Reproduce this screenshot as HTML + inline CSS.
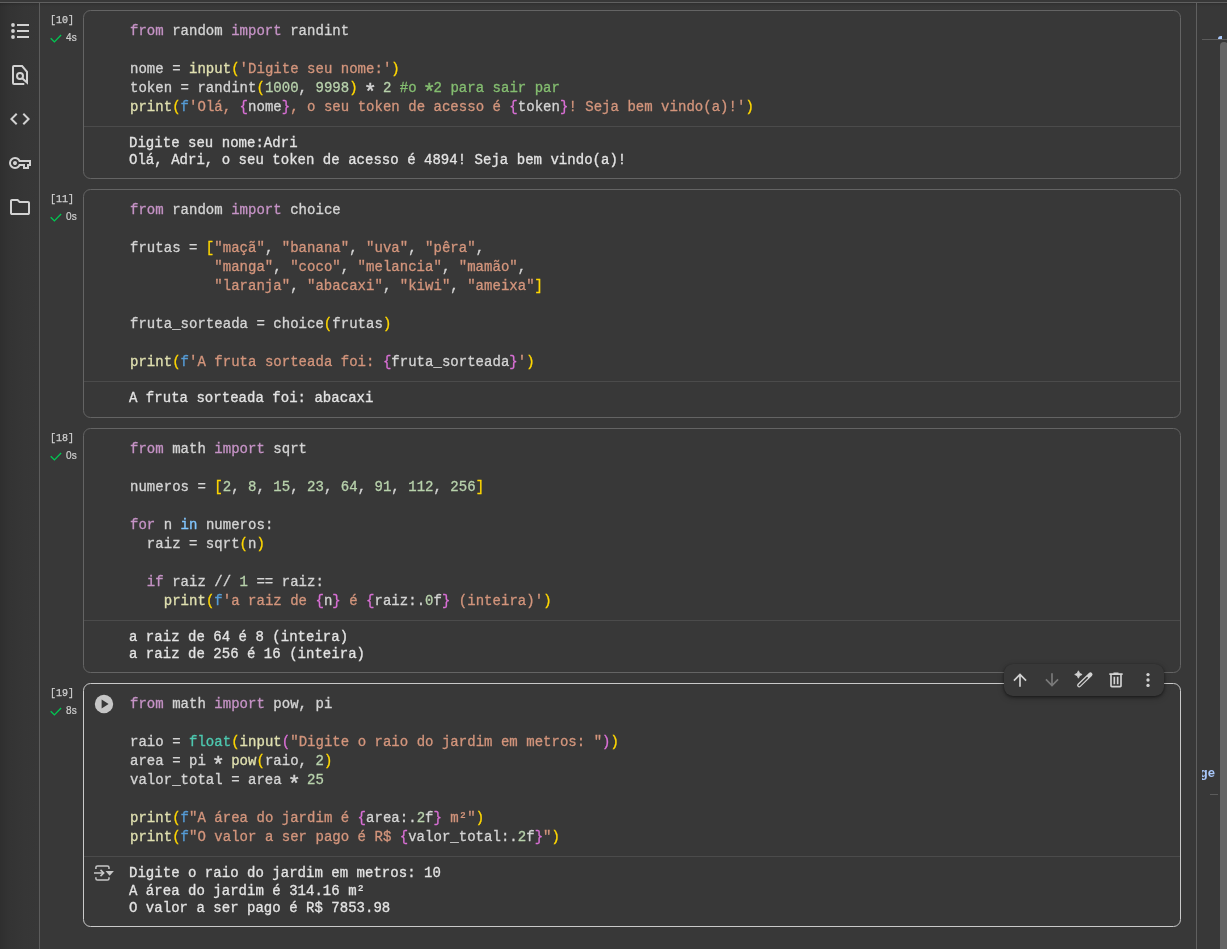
<!DOCTYPE html>
<html>
<head>
<meta charset="utf-8">
<title>Colab</title>
<style>
html,body{margin:0;padding:0;}
body{width:1227px;height:949px;overflow:hidden;position:relative;background:#383838;font-family:"Liberation Sans",sans-serif;}
.abs{position:absolute;}
#topline{left:0;top:2px;width:1227px;height:1px;background:#606060;}
#topshadow{left:0;top:3px;width:1227px;height:4px;background:linear-gradient(to bottom,rgba(0,0,0,.16),rgba(0,0,0,.05) 50%,rgba(0,0,0,0));}
#leftbar{left:0;top:3px;width:39px;height:946px;background:linear-gradient(to right,#2f2f2f 0,#333333 8px,#363636 24px,#373737 39px);}
#leftline{left:39px;top:3px;width:1px;height:946px;background:#5c5c5c;}
#rightline{left:1196px;top:3px;width:1px;height:946px;background:#606060;}
#sbthumb{left:1220px;top:42px;width:8px;height:920px;border-radius:4px;background:#656565;}
#rtick1{left:1202px;top:39px;width:25px;height:1px;background:#5b5b5b;}
#rtick2{left:1210px;top:794px;width:8px;height:1px;background:#5b5b5b;}
#rblue{left:1218px;top:36px;width:4px;height:3px;background:#a8c7fa;border-radius:3px 0 0 0;}
#rge{left:1202px;top:764px;width:13px;height:18px;overflow:hidden;color:#a8c7fa;font:bold 13px/18px "Liberation Sans",sans-serif;}
.side svg{display:block;}
.cell{position:absolute;left:83px;width:1096px;border:1px solid #646464;border-radius:7.500px;box-sizing:content-box;}
.cell.active{border-color:#c9c9c9;}
.div{position:absolute;left:84px;width:1096px;height:1px;background:#4b4b4b;}
.code,.out,.cnt,.tm,#rge{will-change:transform;}
.code,.out{position:absolute;white-space:pre;letter-spacing:0.0273px;-webkit-text-stroke:0.3px;font-family:"Liberation Mono",monospace;font-size:14px;color:#d4d4d4;margin:0;}
.code{left:130px;line-height:19px;}
.out{left:129px;line-height:17px;color:#e3e3e3;}
.k{color:#c693c6}.f{color:#e0e0b0}.s{color:#d3957c}.n{color:#b8d2ac}.c{color:#84bd70}
.a{display:inline-block;transform-origin:50% 5.300px;transform:translateY(3.100px) scale(1.550);}
.b{color:#569cd6}.g{color:#ffd700}.o{color:#da70d6}.t{color:#4ec9b0}.i{color:#82c6ff}
.cnt{-webkit-text-stroke:0.25px;position:absolute;left:50px;font-family:"Liberation Mono",monospace;font-size:10px;line-height:12px;color:#d0d0d0;white-space:pre;}
.tm{-webkit-text-stroke:0.2px;letter-spacing:0.3px;position:absolute;font-family:"Liberation Sans",sans-serif;font-size:10px;line-height:12px;color:#d0d0d0;}
.chk{position:absolute;left:49px;}
#toolbar{left:1004px;top:664px;width:160px;height:32px;border-radius:9px;background:#383838;box-shadow:0 1px 3px rgba(0,0,0,.45),0 2px 6px rgba(0,0,0,.25);}
#toolbar svg{position:absolute;top:6px;}
</style>
</head>
<body>
<div id="topline" class="abs"></div>
<div id="leftbar" class="abs"></div>
<div id="topshadow" class="abs"></div>
<div id="leftline" class="abs"></div>
<div id="rightline" class="abs"></div>
<div id="rtick1" class="abs"></div>
<div id="rblue" class="abs"></div>
<div id="sbthumb" class="abs"></div>
<div id="rge" class="abs"><span style="position:absolute;right:0;white-space:nowrap">page</span></div>
<div id="rtick2" class="abs"></div>

<!-- SIDEBAR ICONS -->
<div class="side">
<svg class="abs" style="left:8px;top:19px" width="24" height="24" viewBox="0 0 24 24" fill="#d2d2d2"><circle cx="5" cy="6" r="1.9"/><circle cx="5" cy="12" r="1.9"/><circle cx="5" cy="18" r="1.9"/><rect x="9" y="5" width="12" height="2"/><rect x="9" y="11" width="12" height="2"/><rect x="9" y="17" width="12" height="2"/></svg>
<svg class="abs" style="left:8px;top:63px" width="24" height="24" viewBox="0 0 24 24" fill="none" stroke="#d2d2d2" stroke-width="2"><path d="M16.300 21H6a1 1 0 0 1-1-1V4a1 1 0 0 1 1-1h8.100L19 8.900V19.600L14.200 15.200"/><circle cx="12" cy="13" r="3"/></svg>
<svg class="abs" style="left:8px;top:107px" width="24" height="24" viewBox="0 -960 960 960" fill="#d2d2d2"><path d="M320-240 80-480l240-240 57 57-184 184 183 183-56 56Zm320 0-57-57 184-184-183-183 56-56 240 240-240 240Z"/></svg>
<svg class="abs" style="left:8px;top:151px" width="24" height="24" viewBox="0 -960 960 960" fill="#d2d2d2"><path d="M280-400q-33 0-56.500-23.500T200-480q0-33 23.500-56.500T280-560q33 0 56.500 23.500T360-480q0 33-23.500 56.500T280-400Zm0 160q-100 0-170-70T40-480q0-100 70-170t170-70q66 0 121 33t87 87h432v240h-80v120H600v-120H488q-32 54-87 87t-121 33Zm0-80q66 0 106-40.500t48-79.500h246v120h80v-120h80v-80H434q-8-39-48-79.500T280-640q-66 0-113 47t-47 113q0 66 47 113t113 47Z"/></svg>
<svg class="abs" style="left:8px;top:195px" width="24" height="24" viewBox="0 -960 960 960" fill="#d2d2d2"><path d="M160-160q-33 0-56.500-23.500T80-240v-480q0-33 23.500-56.500T160-800h240l80 80h320q33 0 56.500 23.500T880-640v400q0 33-23.500 56.500T800-160H160Zm0-80h640v-400H447l-80-80H160v480Zm0 0v-480 480Z"/></svg>
</div>

<!-- CELL 1 -->
<div class="cell" style="top:10px;height:167px"></div>
<div class="div" style="top:126px"></div>
<div class="cnt" style="top:15px">[10]</div>
<svg class="chk" style="top:32px" width="14" height="14" viewBox="0 0 14 14"><path d="M1.700 6.200 5.400 9.900 12.100 3" fill="none" stroke="#00c752" stroke-width="1.350"/></svg>
<div class="tm" style="left:66px;top:32px">4s</div>
<pre class="code" style="top:22px"><span class="k">from</span> random <span class="k">import</span> randint

nome = <span class="f">input</span><span class="g">(</span><span class="s">'Digite seu nome:'</span><span class="g">)</span>
token = randint<span class="g">(</span><span class="n">1000</span>, <span class="n">9998</span><span class="g">)</span> <span class="a">*</span> <span class="n">2</span> <span class="c">#o <span class="a">*</span>2 para sair par</span>
<span class="f">print</span><span class="g">(</span><span class="b">f</span><span class="s">'Olá, </span><span class="o">{</span>nome<span class="o">}</span><span class="s">, o seu token de acesso é </span><span class="o">{</span>token<span class="o">}</span><span class="s">! Seja bem vindo(a)!'</span><span class="g">)</span></pre>
<pre class="out" style="top:135px">Digite seu nome:Adri
Olá, Adri, o seu token de acesso é 4894! Seja bem vindo(a)!</pre>

<!-- CELL 2 -->
<div class="cell" style="top:189px;height:227px"></div>
<div class="div" style="top:381px"></div>
<div class="cnt" style="top:194px">[11]</div>
<svg class="chk" style="top:211px" width="14" height="14" viewBox="0 0 14 14"><path d="M1.700 6.200 5.400 9.900 12.100 3" fill="none" stroke="#00c752" stroke-width="1.350"/></svg>
<div class="tm" style="left:66px;top:211px">0s</div>
<pre class="code" style="top:201px"><span class="k">from</span> random <span class="k">import</span> choice

frutas = <span class="g">[</span><span class="s">"maçã"</span>, <span class="s">"banana"</span>, <span class="s">"uva"</span>, <span class="s">"pêra"</span>,
          <span class="s">"manga"</span>, <span class="s">"coco"</span>, <span class="s">"melancia"</span>, <span class="s">"mamão"</span>,
          <span class="s">"laranja"</span>, <span class="s">"abacaxi"</span>, <span class="s">"kiwi"</span>, <span class="s">"ameixa"</span><span class="g">]</span>

fruta_sorteada = choice<span class="g">(</span>frutas<span class="g">)</span>

<span class="f">print</span><span class="g">(</span><span class="b">f</span><span class="s">'A fruta sorteada foi: </span><span class="o">{</span>fruta_sorteada<span class="o">}</span><span class="s">'</span><span class="g">)</span></pre>
<pre class="out" style="top:390px">A fruta sorteada foi: abacaxi</pre>

<!-- CELL 3 -->
<div class="cell" style="top:428px;height:243px"></div>
<div class="div" style="top:620px"></div>
<div class="cnt" style="top:433px">[18]</div>
<svg class="chk" style="top:450px" width="14" height="14" viewBox="0 0 14 14"><path d="M1.700 6.200 5.400 9.900 12.100 3" fill="none" stroke="#00c752" stroke-width="1.350"/></svg>
<div class="tm" style="left:66px;top:450px">0s</div>
<pre class="code" style="top:440px"><span class="k">from</span> math <span class="k">import</span> sqrt

numeros = <span class="g">[</span><span class="n">2</span>, <span class="n">8</span>, <span class="n">15</span>, <span class="n">23</span>, <span class="n">64</span>, <span class="n">91</span>, <span class="n">112</span>, <span class="n">256</span><span class="g">]</span>

<span class="k">for</span> n <span class="i">in</span> numeros:
  raiz = sqrt<span class="g">(</span>n<span class="g">)</span>

  <span class="k">if</span> raiz // <span class="n">1</span> == raiz:
    <span class="f">print</span><span class="g">(</span><span class="b">f</span><span class="s">'a raiz de </span><span class="o">{</span>n<span class="o">}</span><span class="s"> é </span><span class="o">{</span>raiz:.<span class="n">0</span>f<span class="o">}</span><span class="s"> (inteira)'</span><span class="g">)</span></pre>
<pre class="out" style="top:629px">a raiz de 64 é 8 (inteira)
a raiz de 256 é 16 (inteira)</pre>

<!-- CELL 4 -->
<div class="cell active" style="top:683px;height:242px"></div>
<div class="div" style="top:856px"></div>
<div class="cnt" style="top:688px">[19]</div>
<svg class="chk" style="top:705px" width="14" height="14" viewBox="0 0 14 14"><path d="M1.700 6.200 5.400 9.900 12.100 3" fill="none" stroke="#00c752" stroke-width="1.350"/></svg>
<div class="tm" style="left:66px;top:705px">8s</div>
<svg class="abs" style="left:93px;top:693px" width="22" height="22" viewBox="0 0 24 24"><circle cx="12" cy="12" r="10" fill="#c6c6c6"/><path d="M9.400 7v10l7.600-5z" fill="#383838"/></svg>
<pre class="code" style="top:695px"><span class="k">from</span> math <span class="k">import</span> pow, pi

raio = <span class="t">float</span><span class="g">(</span><span class="f">input</span><span class="o">(</span><span class="s">"Digite o raio do jardim em metros: "</span><span class="o">)</span><span class="g">)</span>
area = pi <span class="a">*</span> <span class="f">pow</span><span class="g">(</span>raio, <span class="n">2</span><span class="g">)</span>
valor_total = area <span class="a">*</span> <span class="n">25</span>

<span class="f">print</span><span class="g">(</span><span class="b">f</span><span class="s">"A área do jardim é </span><span class="o">{</span>area:.<span class="n">2</span>f<span class="o">}</span><span class="s"> m²"</span><span class="g">)</span>
<span class="f">print</span><span class="g">(</span><span class="b">f</span><span class="s">"O valor a ser pago é R$ </span><span class="o">{</span>valor_total:.<span class="n">2</span>f<span class="o">}</span><span class="s">"</span><span class="g">)</span></pre>
<pre class="out" style="top:865px;line-height:17.7px">Digite o raio do jardim em metros: 10
A área do jardim é 314.16 m²
O valor a ser pago é R$ 7853.98</pre>
<!-- output icon -->
<svg class="abs" style="left:94px;top:865px" width="20" height="16" viewBox="0 0 20 16" fill="none" stroke="#c8c8c8" stroke-width="1.500"><path d="M1.900 3.900V2.500Q1.900 .9 3.500 .9H13.400Q15 .9 15 2.500V3.900"/><path d="M1.900 12.200v1.300Q1.900 15.100 3.500 15.100H13.400Q15 15.100 15 13.500V12.200"/><path d="M0 8H9.500M6.500 4.900 9.700 8 6.500 11.100"/><path d="M11.500 6h8.400L15.700 10.800z" fill="#c8c8c8" stroke="none"/></svg>

<!-- TOOLBAR -->
<div id="toolbar" class="abs">
<svg style="left:6px" width="20" height="20" viewBox="0 0 24 24" fill="#d2d2d2"><path d="M4 12l1.410 1.410L11 7.830V20h2V7.830l5.580 5.590L20 12l-8-8-8 8z"/></svg>
<svg style="left:38px" width="20" height="20" viewBox="0 0 24 24" fill="#7a7a7a"><path d="M20 12l-1.410-1.410L13 16.170V4h-2v12.170l-5.580-5.590L4 12l8 8 8-8z"/></svg>
<svg style="left:70px" width="20" height="20" viewBox="0 0 24 24"><path d="M5.300 1 Q5.900 4.800 9.700 5.400 Q5.900 6 5.300 9.800 Q4.700 6 .9 5.400 Q4.700 4.800 5.300 1z" stroke="#d2d2d2" stroke-width="1.100" stroke-linejoin="round" fill="#d2d2d2"/><path d="M6.200 18.400 19.700 5.300" stroke="#d2d2d2" stroke-width="5" stroke-linecap="round" fill="none"/><path d="M6.300 18.500 15.800 9.100" stroke="#383838" stroke-width="1.900" stroke-linecap="round" fill="none"/></svg>
<svg style="left:102px" width="20" height="20" viewBox="0 -960 960 960" fill="#d2d2d2"><path d="M280-120q-33 0-56.500-23.500T200-200v-520h-40v-80h200v-40h240v40h200v80h-40v520q0 33-23.500 56.500T680-120H280Zm400-600H280v520h400v-520ZM360-280h80v-360h-80v360Zm160 0h80v-360h-80v360ZM280-720v520-520Z"/></svg>
<svg style="left:134px" width="20" height="20" viewBox="0 0 24 24" fill="#d2d2d2"><circle cx="12" cy="5.500" r="2"/><circle cx="12" cy="12" r="2"/><circle cx="12" cy="18.500" r="2"/></svg>
</div>
</body>
</html>
